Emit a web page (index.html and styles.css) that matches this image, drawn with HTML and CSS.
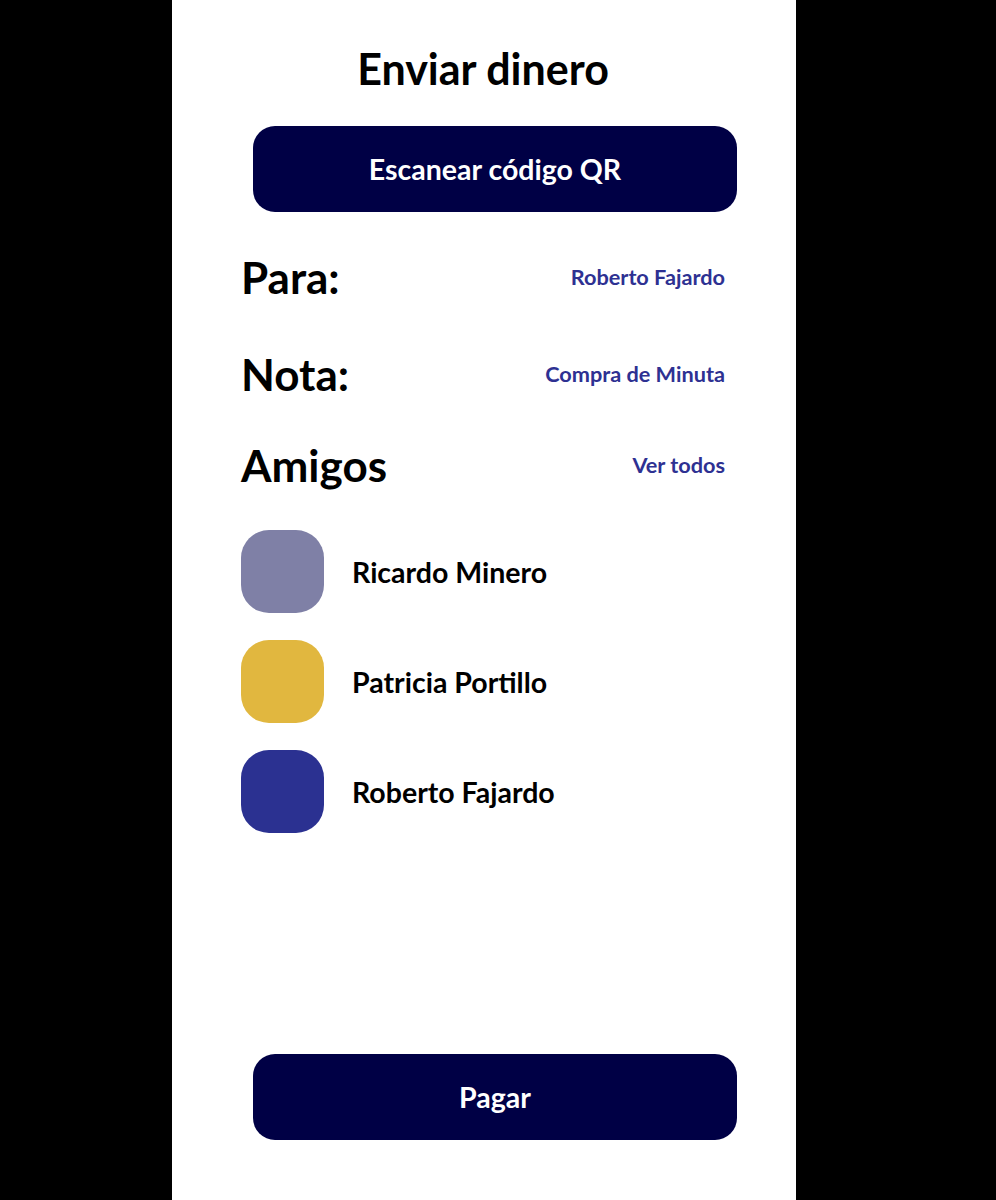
FILE: index.html
```html
<!DOCTYPE html>
<html lang="es">
<head>
  <meta charset="UTF-8">
  <meta name="viewport" content="width=device-width, initial-scale=1.0">
  <title>Enviar dinero</title>
  <link rel="stylesheet" href="styles.css">
</head>
<body>
  <div class="screen">
    <h1>Enviar dinero</h1>
    <button class="btn">Escanear código QR</button>

    <!-- Datos del envio -->
    <div class="row">
      <h2>Para:</h2>
      <a href="#" class="link">Roberto Fajardo</a>
    </div>
    <div class="row">
      <h2>Nota:</h2>
      <a href="#" class="link">Compra de Minuta</a>
    </div>
    <div class="row">
      <h2>Amigos</h2>
      <a href="#" class="link">Ver todos</a>
    </div>

    <!-- Lista de amigos -->
    <ul class="friends">
      <li class="friend">
        <div class="avatar gray"></div>
        <span>Ricardo Minero</span>
      </li>
      <li class="friend">
        <div class="avatar yellow"></div>
        <span>Patricia Portillo</span>
      </li>
      <li class="friend">
        <div class="avatar blue"></div>
        <span>Roberto Fajardo</span>
      </li>
    </ul>

    <button class="btn pay">Pagar</button>
  </div>
</body>
</html>
```

FILE: styles.css
```css
/* General */
html, body {
  margin: 0;
  height: 100%;
  background-color: #000;
}

body {
  font-family: Lato, "Open Sans", sans-serif;
}

.screen {
  width: 624px;
  height: 1200px;
  margin-left: 172px;
  background-color: #fff;
  box-sizing: border-box;
  padding: 44px 71px 0 69px;
  display: flex;
  flex-direction: column;
}

h1 {
  margin: 0;
  font-size: 43px;
  font-weight: 700;
  color: #000;
  text-align: center;
  line-height: 50px;
}

/* Buttons */
.btn {
  margin: 32px 0 0 12px;
  width: 484px;
  height: 86px;
  border: none;
  border-radius: 22px;
  background-color: #000045;
  color: #fff;
  font-family: inherit;
  font-size: 28.5px;
  font-weight: 700;
}

.btn.pay {
  margin-top: auto;
  margin-bottom: 60px;
}

/* Rows */
.row {
  display: flex;
  justify-content: space-between;
  align-items: center;
  height: 50px;
}

.row:nth-of-type(1) {
  margin-top: 40px;
}

.row + .row {
  margin-top: 47px;
}

.row:last-of-type {
  margin-top: 41px;
}

h2 {
  margin: 0;
  font-size: 44px;
  font-weight: 700;
  color: #000;
  line-height: 50px;
}

.link {
  font-size: 21.7px;
  font-weight: 700;
  color: #2e3192;
  text-decoration: none;
}

/* Friends */
.friends {
  list-style: none;
  margin: 40px 0 0;
  padding: 0;
  display: flex;
  flex-direction: column;
  gap: 27px;
}

.friend {
  display: flex;
  align-items: center;
  gap: 28px;
}

.friend span {
  font-size: 28.5px;
  font-weight: 700;
  color: #000;
}

.avatar {
  width: 83px;
  height: 83px;
  border-radius: 28px;
}

.avatar.gray {
  background-color: #7f80a6;
}

.avatar.yellow {
  background-color: #e1b73f;
}

.avatar.blue {
  background-color: #2b3191;
}
```
